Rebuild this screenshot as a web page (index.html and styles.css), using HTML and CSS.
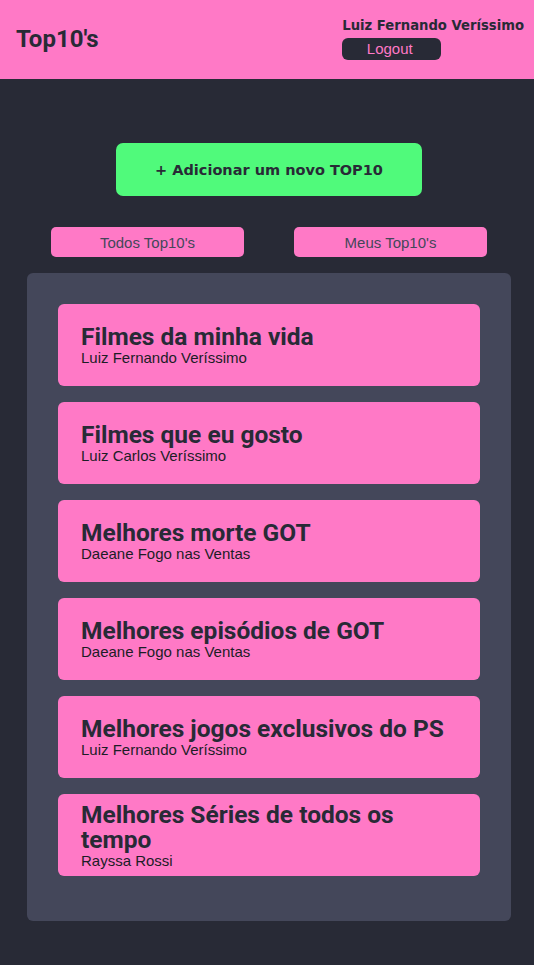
FILE: index.html
```html
<!DOCTYPE html>
<html lang="pt-BR">
<head>
<meta charset="utf-8">
<title>Top10's</title>
<link rel="stylesheet" href="styles.css">
</head>
<body>
<header class="topbar">
  <div class="brand">Top10's</div>
  <div class="user">
    <div class="user-name">Luiz Fernando Veríssimo</div>
    <button class="logout">Logout</button>
  </div>
</header>
<main class="main">
  <button class="add-btn">+ Adicionar um novo TOP10</button>
  <nav class="tabs">
    <button class="tab">Todos Top10's</button>
    <button class="tab">Meus Top10's</button>
  </nav>
  <section class="list">
    <article class="card"><h2 class="card-title">Filmes da minha vida</h2><p class="card-author">Luiz Fernando Veríssimo</p></article>
    <article class="card"><h2 class="card-title">Filmes que eu gosto</h2><p class="card-author">Luiz Carlos Veríssimo</p></article>
    <article class="card"><h2 class="card-title">Melhores morte GOT</h2><p class="card-author">Daeane Fogo nas Ventas</p></article>
    <article class="card"><h2 class="card-title">Melhores episódios de GOT</h2><p class="card-author">Daeane Fogo nas Ventas</p></article>
    <article class="card"><h2 class="card-title">Melhores jogos exclusivos do PS</h2><p class="card-author">Luiz Fernando Veríssimo</p></article>
    <article class="card"><h2 class="card-title">Melhores Séries de todos os tempo</h2><p class="card-author">Rayssa Rossi</p></article>
  </section>
</main>
</body>
</html>
```
FILE: styles.css
```css
* { box-sizing: border-box; }
html, body {
  margin: 0;
  padding: 0;
  background: #282a36;
  font-family: "Liberation Sans", Arial, sans-serif;
  color: #282a36;
}
button {
  font-family: inherit;
  border: none;
  cursor: pointer;
}
.topbar {
  height: 79px;
  background: #ff79c6;
  display: flex;
  align-items: center;
  justify-content: space-between;
  padding: 0 10px 2px 16px;
}
.brand {
  font-family: Roboto, "Liberation Sans", sans-serif;
  font-size: 24px;
  font-weight: bold;
  color: #282a36;
}
.user {
  display: flex;
  flex-direction: column;
  align-items: flex-start;
  gap: 5px;
}
.user-name {
  font-family: "DejaVu Sans", sans-serif;
  font-size: 13.2px;
  font-weight: bold;
  color: #282a36;
}
.logout {
  width: 99px;
  height: 22px;
  padding: 0 4px 0 0;
  background: #282a36;
  color: #ff79c6;
  font-size: 15px;
  line-height: 22px;
  border-radius: 6px;
}
.main {
  width: 484px;
  margin: 0 0 44px 27px;
  padding-top: 64px;
  display: flex;
  flex-direction: column;
  align-items: center;
}
.add-btn {
  width: 306px;
  height: 53px;
  background: #50fa7b;
  color: #282a36;
  font-family: "DejaVu Sans", sans-serif;
  font-size: 14.5px;
  font-weight: bold;
  border-radius: 7px;
  padding: 0;
}
.tabs {
  width: 100%;
  display: flex;
  justify-content: space-between;
  padding: 0 24px;
  margin-top: 31px;
}
.tab {
  width: 193px;
  height: 30px;
  background: #ff79c6;
  color: #44475a;
  font-size: 15px;
  border-radius: 5px;
  padding: 0;
}
.list {
  width: 100%;
  margin-top: 16px;
  background: #44475a;
  border-radius: 6px;
  padding: 31px 31px 30px;
  display: flex;
  flex-direction: column;
  gap: 16px;
  height: 648px;
}
.card {
  height: 82px;
  flex: none;
  background: #ff79c6;
  border-radius: 6px;
  padding: 0 23px;
  display: flex;
  flex-direction: column;
  justify-content: center;
}
.card-title {
  margin: 0;
  font-family: Roboto, "Liberation Sans", sans-serif;
  font-size: 24.5px;
  line-height: 25px;
  font-weight: bold;
  color: #282a36;
}
.card-author {
  margin: 0;
  font-size: 15px;
  color: #1c1d26;
}
```
